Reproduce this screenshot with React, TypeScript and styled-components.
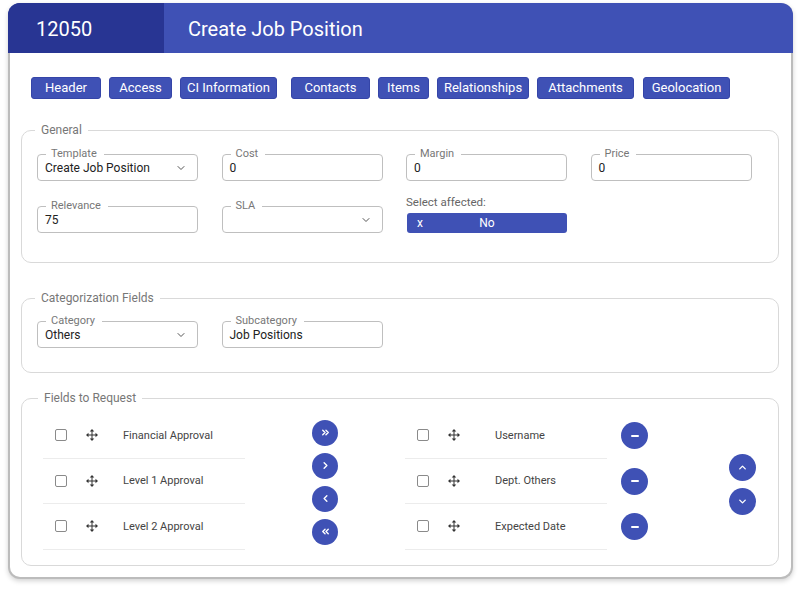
import React from "react";
import styled, { createGlobalStyle } from "styled-components";
import { ChevronDown, ChevronUp, ChevronsRight, ChevronsLeft, ChevronRight, ChevronLeft } from "lucide-react";

const Global = createGlobalStyle`
  html, body { margin: 0; padding: 0; background: #fff; }
  body { font-family: Roboto, "Noto Sans", sans-serif; }
  * { box-sizing: border-box; }
`;

const Page = styled.div`
  padding: 3px 7px 12px 8px;
  width: 800px;
`;

const Card = styled.div`
  width: 785px;
  border: 2px solid #bcbcbc;
  border-top: 0;
  border-radius: 12px;
  background: #fff;
  box-shadow: 0 2px 5px rgba(0, 0, 0, 0.18);
`;

const Header = styled.div`
  display: flex;
  height: 50px;
  margin: 0 -2px;
  border-radius: 12px 12px 0 0;
  overflow: hidden;
  background: #3f51b5;
  color: #fff;
`;

const HeaderId = styled.div`
  width: 156px;
  background: #283593;
  display: flex;
  align-items: center;
  padding: 2px 0 0 28px;
  font-size: 20px;
`;

const HeaderTitle = styled.div`
  display: flex;
  align-items: center;
  padding: 2px 0 0 24px;
  font-size: 20px;
`;

const Body = styled.div`
  padding: 0 12px 11px 11px;
`;

const Tabs = styled.div`
  display: flex;
  gap: 8px;
  margin: 24px 0 0 10px;
`;

const Tab = styled.button<{ $w: number; $ml: number }>`
  width: ${(p) => p.$w}px;
  margin-left: ${(p) => p.$ml}px;
  height: 22px;
  padding: 0;
  border: 1px solid #3545a8;
  border-radius: 3px;
  background: #3f51b5;
  color: #fff;
  font-family: inherit;
  font-size: 13px;
  line-height: 20px;
  white-space: nowrap;
  cursor: pointer;
`;

const Group = styled.fieldset<{ $mt: number; $pt: number; $pb: number }>`
  margin: ${(p) => p.$mt}px 0 0 0;
  padding: ${(p) => p.$pt}px 15px ${(p) => p.$pb}px 15px;
  border: 1px solid #d9d9d9;
  border-radius: 10px;
  min-width: 0;
`;

const GroupLegend = styled.legend<{ $ml?: number }>`
  margin-left: ${(p) => p.$ml ?? -2}px;
  padding: 0 6px;
  font-size: 12px;
  line-height: 16px;
  color: #777;
`;

const FieldGrid = styled.div`
  display: grid;
  grid-template-columns: repeat(4, 161px);
  column-gap: 23.5px;
  row-gap: 25px;
`;

const Field = styled.div`
  position: relative;
  height: 27px;
  border: 1px solid #bfbfbf;
  border-radius: 4px;
  display: flex;
  align-items: center;
  justify-content: space-between;
  padding: 0 10px 0 7px;
  font-size: 12px;
  color: #222;
`;

const FieldLabel = styled.span`
  position: absolute;
  top: -7px;
  left: 8px;
  padding: 0 7px 0 5px;
  background: #fff;
  font-size: 11px;
  line-height: 12px;
  color: #777;
`;

const AffectedCell = styled.div`
  align-self: end;
  margin-top: -11px;
  display: flex;
  flex-direction: column;
  gap: 4px;
`;

const AffectedLabel = styled.span`
  font-size: 11.5px;
  line-height: 14px;
  color: #666;
`;

const AffectedBar = styled.div`
  width: 160px;
  height: 20px;
  margin-left: 1px;
  border-radius: 3px;
  background: #3f51b5;
  color: #fff;
  display: grid;
  grid-template-columns: 1fr auto 1fr;
  align-items: center;
  font-size: 12px;
`;

const BarX = styled.span`
  padding-left: 10px;
`;

const Transfer = styled.div`
  display: flex;
  align-items: center;
  padding-left: 6px;
`;

const List = styled.div<{ $ml?: number }>`
  display: flex;
  flex-direction: column;
  margin-left: ${(p) => p.$ml ?? 0}px;
`;

const RightRow = styled.div`
  display: flex;
  align-items: center;
  gap: 14px;
`;

const Item = styled.div<{ $textCol: number }>`
  width: 202px;
  height: 45.5px;
  border-bottom: 1px solid #ececec;
  display: grid;
  grid-template-columns: 31px ${(p) => p.$textCol}px 1fr;
  align-items: center;
  padding-left: 12px;
  font-size: 11px;
  color: #444;
`;

const Check = styled.span`
  width: 12px;
  height: 12px;
  border: 1.5px solid #8a8a8a;
  border-radius: 2px;
`;

const ButtonCol = styled.div<{ $ml: number; $mt?: number }>`
  display: flex;
  flex-direction: column;
  gap: 7px;
  margin-left: ${(p) => p.$ml}px;
  margin-top: ${(p) => p.$mt ?? 0}px;
`;

const Round = styled.button<{ $size: number }>`
  width: ${(p) => p.$size}px;
  height: ${(p) => p.$size}px;
  border-radius: 50%;
  border: 0;
  padding: 0;
  background: #3f51b5;
  color: #fff;
  display: flex;
  align-items: center;
  justify-content: center;
  cursor: pointer;
  flex-shrink: 0;
`;

const MinusBar = styled.span`
  width: 8px;
  height: 2px;
  background: #fff;
  border-radius: 1px;
`;

const MoveIcon = () => (
  <svg width="12" height="12" viewBox="0 0 24 24" fill="#333">
    <rect x="11" y="4" width="2" height="16" />
    <rect x="4" y="11" width="16" height="2" />
    <polygon points="12,0 7.5,5 16.5,5" />
    <polygon points="12,24 7.5,19 16.5,19" />
    <polygon points="0,12 5,7.5 5,16.5" />
    <polygon points="24,12 19,7.5 19,16.5" />
  </svg>
);

const tabs = [
  { label: "Header", w: 70, ml: 0 },
  { label: "Access", w: 63, ml: 0 },
  { label: "CI Information", w: 97, ml: 0 },
  { label: "Contacts", w: 79, ml: 6 },
  { label: "Items", w: 51, ml: 0 },
  { label: "Relationships", w: 92, ml: 0 },
  { label: "Attachments", w: 97, ml: 0 },
  { label: "Geolocation", w: 87, ml: 1 },
];

const leftItems = ["Financial Approval", "Level 1 Approval", "Level 2 Approval"];
const rightItems = ["Username", "Dept. Others", "Expected Date"];

function TextField({ label, value, select }: { label: string; value: string; select?: boolean }) {
  return (
    <Field>
      <FieldLabel>{label}</FieldLabel>
      <span>{value}</span>
      {select && <ChevronDown size={12} color="#555" strokeWidth={2} />}
    </Field>
  );
}

export default function App() {
  return (
    <Page>
      <Global />
      <Card>
        <Header>
          <HeaderId>12050</HeaderId>
          <HeaderTitle>Create Job Position</HeaderTitle>
        </Header>
        <Body>
          <Tabs>
            {tabs.map((t) => (
              <Tab key={t.label} $w={t.w} $ml={t.ml}>
                {t.label}
              </Tab>
            ))}
          </Tabs>

          <Group $mt={23} $pt={16} $pb={29}>
            <GroupLegend>General</GroupLegend>
            <FieldGrid>
              <TextField label="Template" value="Create Job Position" select />
              <TextField label="Cost" value="0" />
              <TextField label="Margin" value="0" />
              <TextField label="Price" value="0" />
              <TextField label="Relevance" value="75" />
              <TextField label="SLA" value="" select />
              <AffectedCell>
                <AffectedLabel>Select affected:</AffectedLabel>
                <AffectedBar>
                  <BarX>x</BarX>
                  <span>No</span>
                  <span />
                </AffectedBar>
              </AffectedCell>
            </FieldGrid>
          </Group>

          <Group $mt={27} $pt={15} $pb={24}>
            <GroupLegend>Categorization Fields</GroupLegend>
            <FieldGrid>
              <TextField label="Category" value="Others" select />
              <TextField label="Subcategory" value="Job Positions" />
            </FieldGrid>
          </Group>

          <Group $mt={17} $pt={7} $pb={15}>
            <GroupLegend $ml={1}>Fields to Request</GroupLegend>
            <Transfer>
              <List>
                {leftItems.map((t) => (
                  <Item key={t} $textCol={37}>
                    <Check />
                    <MoveIcon />
                    <span>{t}</span>
                  </Item>
                ))}
              </List>
              <ButtonCol $ml={67} $mt={2}>
                <Round $size={26}><ChevronsRight size={11} strokeWidth={3} /></Round>
                <Round $size={26}><ChevronRight size={11} strokeWidth={3} /></Round>
                <Round $size={26}><ChevronLeft size={11} strokeWidth={3} /></Round>
                <Round $size={26}><ChevronsLeft size={11} strokeWidth={3} /></Round>
              </ButtonCol>
              <List $ml={67}>
                {rightItems.map((t) => (
                  <RightRow key={t}>
                    <Item $textCol={47}>
                      <Check />
                      <MoveIcon />
                      <span>{t}</span>
                    </Item>
                    <Round $size={27}><MinusBar /></Round>
                  </RightRow>
                ))}
              </List>
              <ButtonCol $ml={81} $mt={6}>
                <Round $size={27}><ChevronUp size={11} strokeWidth={3} /></Round>
                <Round $size={27}><ChevronDown size={11} strokeWidth={3} /></Round>
              </ButtonCol>
            </Transfer>
          </Group>
        </Body>
      </Card>
    </Page>
  );
}
